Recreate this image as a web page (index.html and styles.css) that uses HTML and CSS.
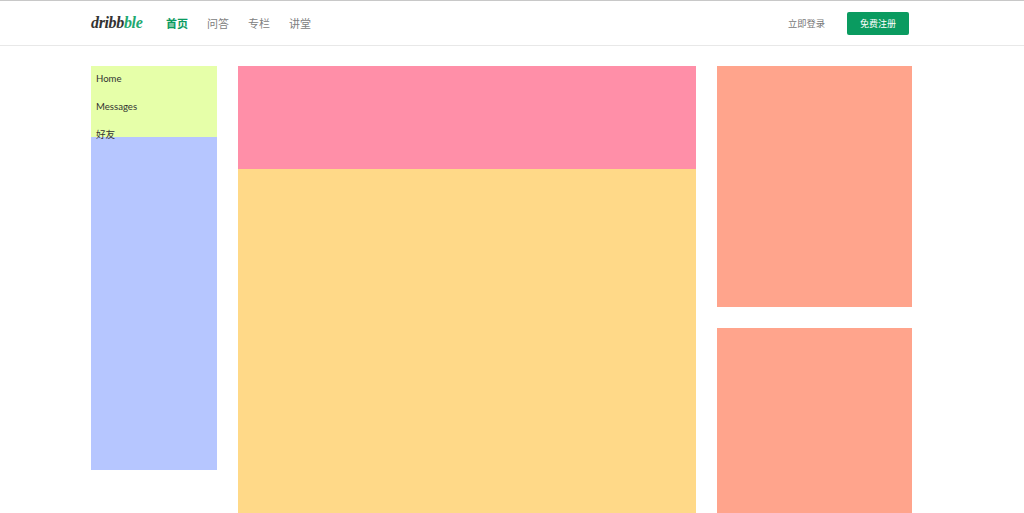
FILE: index.html
```html
<!DOCTYPE html>
<html>
<head>
  <title>Dribbble</title>
  <link rel="stylesheet" href="styles.css">
</head>
<body>
  <div class="header">
    <div class="logo">dribb<span class="logo-green">ble</span></div>
    <div class="nav">
      <a class="nav-item active">首页</a>
      <a class="nav-item">问答</a>
      <a class="nav-item">专栏</a>
      <a class="nav-item">讲堂</a>
    </div>
    <a class="login">立即登录</a>
    <a class="signup">免费注册</a>
  </div>
  <div class="content">
    <div class="left">
      <ul class="menu">
        <li>Home</li>
        <li>Messages</li>
        <li>好友</li>
      </ul>
      <div class="left-block"></div>
    </div>
    <div class="main">
      <div class="main-top"></div>
      <div class="main-body"></div>
    </div>
    <div class="right">
      <div class="right-block"></div>
      <div class="right-block bottom"></div>
    </div>
  </div>
</body>
</html>
```

FILE: styles.css
```css
body {
  display: flex;
  flex-direction: column;
  height: 100vh;
  margin: 0;
  padding: 0;
  background-color: #fff;
  color: #333;
  font-family: Lato, "Noto Sans CJK SC", sans-serif;
}

.header {
  display: flex;
  align-items: center;
  box-sizing: border-box;
  height: 46px;
  padding: 0 115px 0 91px;
  border-top: 1px solid #c8c8c8;
  border-bottom: 1px solid #e8e8e8;
}

.logo {
  width: 75px;
  font-family: "Liberation Serif", serif;
  font-style: italic;
  font-weight: bold;
  font-size: 16px;
  letter-spacing: -0.35px;
  color: #333;
}

.logo-green {
  color: #1fa971;
}

.nav {
  display: flex;
  flex-grow: 1;
  gap: 19px;
}

.nav-item {
  font-size: 11px;
  color: #808080;
}

.nav-item.active {
  color: #0a9b60;
  font-weight: bold;
}

.login {
  margin-right: 22px;
  font-size: 9.25px;
  color: #777;
}

.signup {
  width: 62px;
  height: 23px;
  line-height: 23px;
  text-align: center;
  border-radius: 2px;
  background-color: #0a9b60;
  color: #fff;
  font-size: 9px;
}

.content {
  display: flex;
  flex-grow: 1;
  gap: 21px;
  min-height: 0;
  margin-top: 20px;
  padding-left: 91px;
}

.left {
  width: 126px;
}

.menu {
  height: 71px;
  margin: 0;
  padding: 0;
  list-style: none;
  background-color: #e6ffa9;
  font-size: 9.6px;
}

.menu li {
  height: 28px;
  line-height: 26px;
  padding-left: 5px;
}

.left-block {
  height: 333px;
  background-color: #b6c6ff;
}

.main {
  display: flex;
  flex-direction: column;
  width: 458px;
}

.main-top {
  height: 103px;
  background-color: #ff8fa8;
}

.main-body {
  flex-grow: 1;
  background-color: #ffd988;
}

.right {
  display: flex;
  flex-direction: column;
  gap: 21px;
  width: 195px;
}

.right-block {
  height: 241px;
  background-color: #ffa48c;
}

.right-block.bottom {
  height: auto;
  flex-grow: 1;
}
```
